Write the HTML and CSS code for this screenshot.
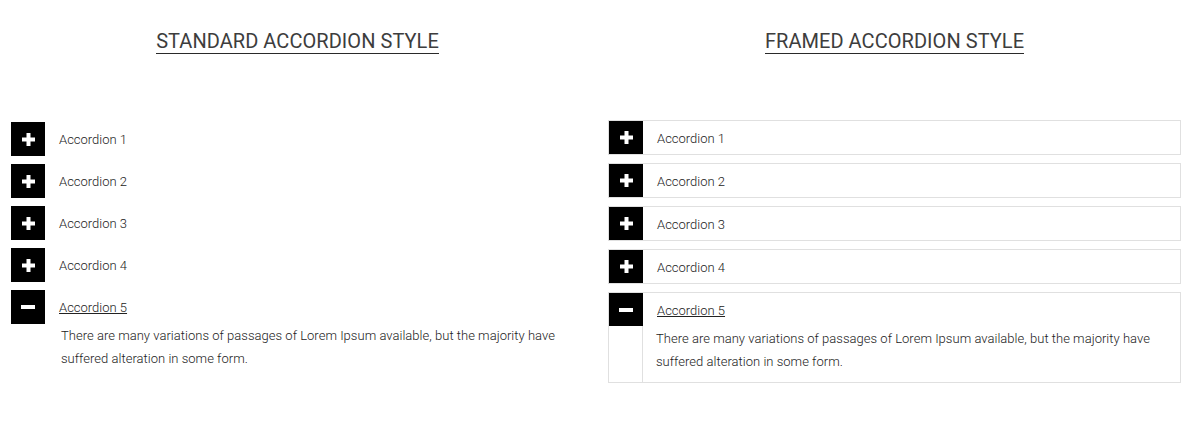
FILE: index.html
```html
<!DOCTYPE html>
<html>
<head>
<meta charset="utf-8">
<link rel="stylesheet" href="styles.css">
</head>
<body>
<div class="page">
  <section class="col">
    <h2 class="title"><span>STANDARD ACCORDION STYLE</span></h2>
    <div class="std">
      <div class="item"><div class="head"><span class="ico"><svg width="13" height="13" viewBox="0 0 13 13"><rect x="4.5" y="0" width="4" height="13" fill="#fff"/><rect x="0" y="4.5" width="13" height="4" fill="#fff"/></svg></span><span class="label">Accordion 1</span></div></div>
      <div class="item"><div class="head"><span class="ico"><svg width="13" height="13" viewBox="0 0 13 13"><rect x="4.5" y="0" width="4" height="13" fill="#fff"/><rect x="0" y="4.5" width="13" height="4" fill="#fff"/></svg></span><span class="label">Accordion 2</span></div></div>
      <div class="item"><div class="head"><span class="ico"><svg width="13" height="13" viewBox="0 0 13 13"><rect x="4.5" y="0" width="4" height="13" fill="#fff"/><rect x="0" y="4.5" width="13" height="4" fill="#fff"/></svg></span><span class="label">Accordion 3</span></div></div>
      <div class="item"><div class="head"><span class="ico"><svg width="13" height="13" viewBox="0 0 13 13"><rect x="4.5" y="0" width="4" height="13" fill="#fff"/><rect x="0" y="4.5" width="13" height="4" fill="#fff"/></svg></span><span class="label">Accordion 4</span></div></div>
      <div class="item open"><div class="head"><span class="ico"><svg width="14" height="4" viewBox="0 0 14 4"><rect x="0" y="0" width="14" height="4" fill="#fff"/></svg></span><span class="label">Accordion 5</span></div>
        <p class="body">There are many variations of passages of Lorem Ipsum available, but the majority have suffered alteration in some form.</p>
      </div>
    </div>
  </section>
  <section class="col">
    <h2 class="title"><span>FRAMED ACCORDION STYLE</span></h2>
    <div class="framed">
      <div class="fitem"><div class="rail"><span class="ico"><svg width="13" height="13" viewBox="0 0 13 13"><rect x="4.5" y="0" width="4" height="13" fill="#fff"/><rect x="0" y="4.5" width="13" height="4" fill="#fff"/></svg></span></div><div class="fmain"><div class="fhead">Accordion 1</div></div></div>
      <div class="fitem"><div class="rail"><span class="ico"><svg width="13" height="13" viewBox="0 0 13 13"><rect x="4.5" y="0" width="4" height="13" fill="#fff"/><rect x="0" y="4.5" width="13" height="4" fill="#fff"/></svg></span></div><div class="fmain"><div class="fhead">Accordion 2</div></div></div>
      <div class="fitem"><div class="rail"><span class="ico"><svg width="13" height="13" viewBox="0 0 13 13"><rect x="4.5" y="0" width="4" height="13" fill="#fff"/><rect x="0" y="4.5" width="13" height="4" fill="#fff"/></svg></span></div><div class="fmain"><div class="fhead">Accordion 3</div></div></div>
      <div class="fitem"><div class="rail"><span class="ico"><svg width="13" height="13" viewBox="0 0 13 13"><rect x="4.5" y="0" width="4" height="13" fill="#fff"/><rect x="0" y="4.5" width="13" height="4" fill="#fff"/></svg></span></div><div class="fmain"><div class="fhead">Accordion 4</div></div></div>
      <div class="fitem open"><div class="rail"><span class="ico"><svg width="14" height="4" viewBox="0 0 14 4"><rect x="0" y="0" width="14" height="4" fill="#fff"/></svg></span></div><div class="fmain"><div class="fhead">Accordion 5</div>
        <p class="fbody">There are many variations of passages of Lorem Ipsum available, but the majority have suffered alteration in some form.</p></div></div>
    </div>
  </section>
</div>
</body>
</html>
```

FILE: styles.css
```css
* { box-sizing: border-box; }
html, body { margin: 0; padding: 0; background: #fff; }
body { font-family: Roboto, "Liberation Sans", sans-serif; color: #444; }

.page {
  display: grid;
  grid-template-columns: 573px 573px;
  column-gap: 24px;
  margin-left: 11px;
}

.title {
  display: flex;
  justify-content: center;
  margin: 30px 0 0;
  font-weight: 400;
}
.title span {
  display: inline-block;
  font-size: 20px;
  line-height: 23px;
  letter-spacing: 0.05px;
  color: #3d3d3d;
  border-bottom: 1px solid #2a2a2a;
}

/* standard */
.std {
  margin-top: 68px;
  display: flex;
  flex-direction: column;
  gap: 8px;
}
.head {
  display: flex;
  align-items: center;
  height: 34px;
}
.ico {
  display: flex;
  align-items: center;
  justify-content: center;
  width: 34px;
  height: 34px;
  background: #000;
  flex: none;
}
.label {
  margin-left: 14px;
  font-size: 13px;
  font-weight: 300;
  color: #222;
}
.open .label, .open .fhead { text-decoration: underline; }
.body {
  margin: 0;
  padding-left: 50px;
  font-size: 13px;
  font-weight: 300;
  line-height: 23px;
  letter-spacing: 0.025px;
  color: #222;
}

/* framed */
.framed {
  margin-top: 66px;
  display: flex;
  flex-direction: column;
  gap: 8px;
}
.fitem {
  display: flex;
  border: 1px solid #e0e0e0;
}
.rail {
  width: 34px;
  flex: none;
  border-right: 1px solid #e0e0e0;
}
.rail .ico { height: 33px; }
.fmain { flex: 1; min-width: 0; }
.fhead {
  height: 33px;
  display: flex;
  align-items: center;
  padding: 2px 0 0 14px;
  font-size: 13px;
  font-weight: 300;
  color: #222;
}
.fbody {
  margin: 0;
  padding: 1px 0 9px 13px;
  font-size: 13px;
  font-weight: 300;
  line-height: 23px;
  letter-spacing: 0.025px;
  color: #222;
}
```
